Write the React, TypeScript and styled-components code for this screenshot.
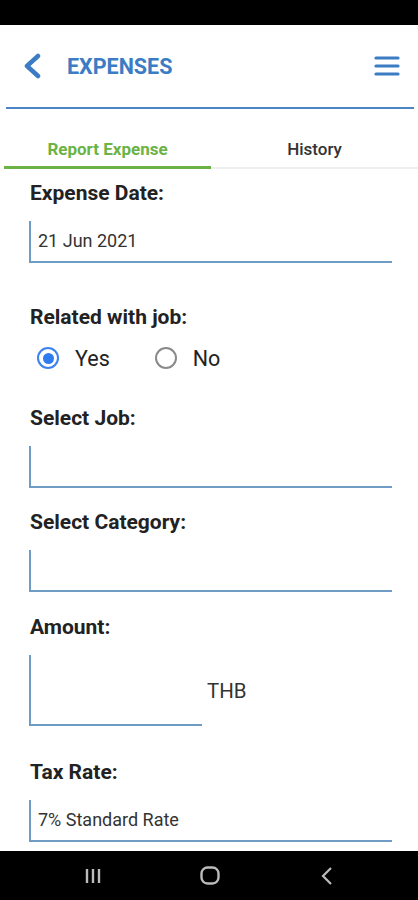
import React from 'react';
import styled, { createGlobalStyle } from 'styled-components';

const GlobalStyle = createGlobalStyle`
  html, body {
    margin: 0;
    padding: 0;
    background: #fff;
    font-family: Roboto, 'Liberation Sans', sans-serif;
  }
`;

const Screen = styled.div`
  width: 418px;
  height: 900px;
  display: flex;
  flex-direction: column;
  overflow: hidden;
  background: #fff;
`;

const StatusBar = styled.div`
  height: 25px;
  background: #000;
  flex-shrink: 0;
`;

const Header = styled.header`
  height: 82px;
  display: flex;
  align-items: center;
  padding: 0 14px 0 16px;
  border-bottom: 2px solid #4a85c6;
  margin: 0 4px 0 6px;
  flex-shrink: 0;
`;

const IconButton = styled.button`
  background: none;
  border: 0;
  padding: 0;
  display: flex;
  align-items: center;
  cursor: pointer;
`;

const Title = styled.h1`
  flex: 1;
  margin: 0 0 0 23px;
  font-size: 21.5px;
  font-weight: 700;
  color: #3b7cc4;
`;

const Tabs = styled.div`
  display: flex;
  height: 60px;
  flex-shrink: 0;
`;

const Tab = styled.div<{ $active?: boolean }>`
  flex: 1;
  display: flex;
  align-items: flex-end;
  justify-content: center;
  box-sizing: border-box;
  padding-bottom: ${p => (p.$active ? '7px' : '8px')};
  line-height: 20px;
  font-size: 17px;
  font-weight: ${p => (p.$active ? 700 : 500)};
  color: ${p => (p.$active ? '#6bb344' : '#333')};
  border-bottom: ${p => (p.$active ? '3px solid #6bb344' : '2px solid #eee')};
  margin-left: ${p => (p.$active ? '4px' : '0')};
`;

const Form = styled.form`
  flex: 1;
  padding: 14px 0 0 29px;
  overflow: hidden;
`;

const Field = styled.div<{ $after: number }>`
  margin-bottom: ${p => p.$after}px;
`;

const Label = styled.div`
  font-size: 21px;
  font-weight: 700;
  line-height: 20px;
  color: #222;
  margin-left: 1px;
`;

const InputRow = styled.div`
  display: flex;
  align-items: center;
  margin-top: 18px;
`;

const Input = styled.div<{ $w: number; $h: number }>`
  width: ${p => p.$w}px;
  height: ${p => p.$h}px;
  box-sizing: border-box;
  border-left: 2px solid #6f9cc4;
  border-bottom: 2px solid #6f9cc4;
  display: flex;
  align-items: center;
  padding: 0 0 2px 7px;
  font-size: 18px;
  color: #333;
`;

const Unit = styled.span`
  font-size: 20.5px;
  color: #333;
  margin-left: 5px;
`;

const RadioGroup = styled.div`
  display: flex;
  align-items: center;
  height: 24px;
  margin-top: 19px;
  padding-left: 8px;
`;

const RadioOption = styled.label`
  display: flex;
  align-items: center;
  font-size: 21.5px;
  color: #222;
  margin-right: 45px;
`;

const RadioCircle = styled.span<{ $on?: boolean }>`
  width: 22px;
  height: 22px;
  box-sizing: border-box;
  border-radius: 50%;
  border: 2px solid ${p => (p.$on ? '#3b82f0' : '#8a8a8a')};
  margin-right: 16px;
  display: flex;
  align-items: center;
  justify-content: center;
  &::after {
    content: '';
    width: 11px;
    height: 11px;
    border-radius: 50%;
    background: ${p => (p.$on ? '#2f7bf0' : 'transparent')};
  }
`;

const NavBar = styled.div`
  height: 49px;
  background: #000;
  flex-shrink: 0;
  display: flex;
  align-items: center;
  justify-content: space-around;
  padding: 0 32px 0 34px;
`;

const NavIcon = styled.div`
  width: 40px;
  display: flex;
  justify-content: center;
`;

const App = () => {
  return (
    <Screen>
      <GlobalStyle />
      <StatusBar />
      <Header>
        <IconButton aria-label="back">
          <svg width="22" height="26" viewBox="0 0 22 26">
            <polyline points="16,3 5,13 16,23" fill="none" stroke="#3b7cc4" strokeWidth="4.5" strokeLinecap="round" strokeLinejoin="round" />
          </svg>
        </IconButton>
        <Title>EXPENSES</Title>
        <IconButton aria-label="menu">
          <svg width="26" height="22" viewBox="0 0 26 22">
            <g stroke="#3b7cc4" strokeWidth="3.2" strokeLinecap="round">
              <line x1="2" y1="3" x2="24" y2="3" />
              <line x1="2" y1="11" x2="24" y2="11" />
              <line x1="2" y1="19" x2="24" y2="19" />
            </g>
          </svg>
        </IconButton>
      </Header>
      <Tabs>
        <Tab $active>Report Expense</Tab>
        <Tab>History</Tab>
      </Tabs>
      <Form>
        <Field $after={44}>
          <Label>Expense Date:</Label>
          <InputRow>
            <Input $w={363} $h={42}>21 Jun 2021</Input>
          </InputRow>
        </Field>
        <Field $after={38}>
          <Label>Related with job:</Label>
          <RadioGroup>
            <RadioOption>
              <RadioCircle $on />
              Yes
            </RadioOption>
            <RadioOption>
              <RadioCircle />
              No
            </RadioOption>
          </RadioGroup>
        </Field>
        <Field $after={24}>
          <Label>Select Job:</Label>
          <InputRow>
            <Input $w={363} $h={42} />
          </InputRow>
        </Field>
        <Field $after={25}>
          <Label>Select Category:</Label>
          <InputRow>
            <Input $w={363} $h={42} />
          </InputRow>
        </Field>
        <Field $after={36}>
          <Label>Amount:</Label>
          <InputRow>
            <Input $w={173} $h={71} />
            <Unit>THB</Unit>
          </InputRow>
        </Field>
        <Field $after={0}>
          <Label>Tax Rate:</Label>
          <InputRow>
            <Input $w={363} $h={42}>7% Standard Rate</Input>
          </InputRow>
        </Field>
      </Form>
      <NavBar>
        <NavIcon>
          <svg width="18" height="16" viewBox="0 0 18 16">
            <g stroke="#bbb" strokeWidth="2.4">
              <line x1="3" y1="1" x2="3" y2="15" />
              <line x1="9" y1="1" x2="9" y2="15" />
              <line x1="15" y1="1" x2="15" y2="15" />
            </g>
          </svg>
        </NavIcon>
        <NavIcon>
          <svg width="20" height="19" viewBox="0 0 20 19">
            <rect x="1.5" y="1.5" width="17" height="16" rx="6" fill="none" stroke="#bbb" strokeWidth="2.4" />
          </svg>
        </NavIcon>
        <NavIcon>
          <svg width="12" height="18" viewBox="0 0 12 18">
            <polyline points="10,1 2,9 10,17" fill="none" stroke="#bbb" strokeWidth="2.2" />
          </svg>
        </NavIcon>
      </NavBar>
    </Screen>
  );
};

export default App;
